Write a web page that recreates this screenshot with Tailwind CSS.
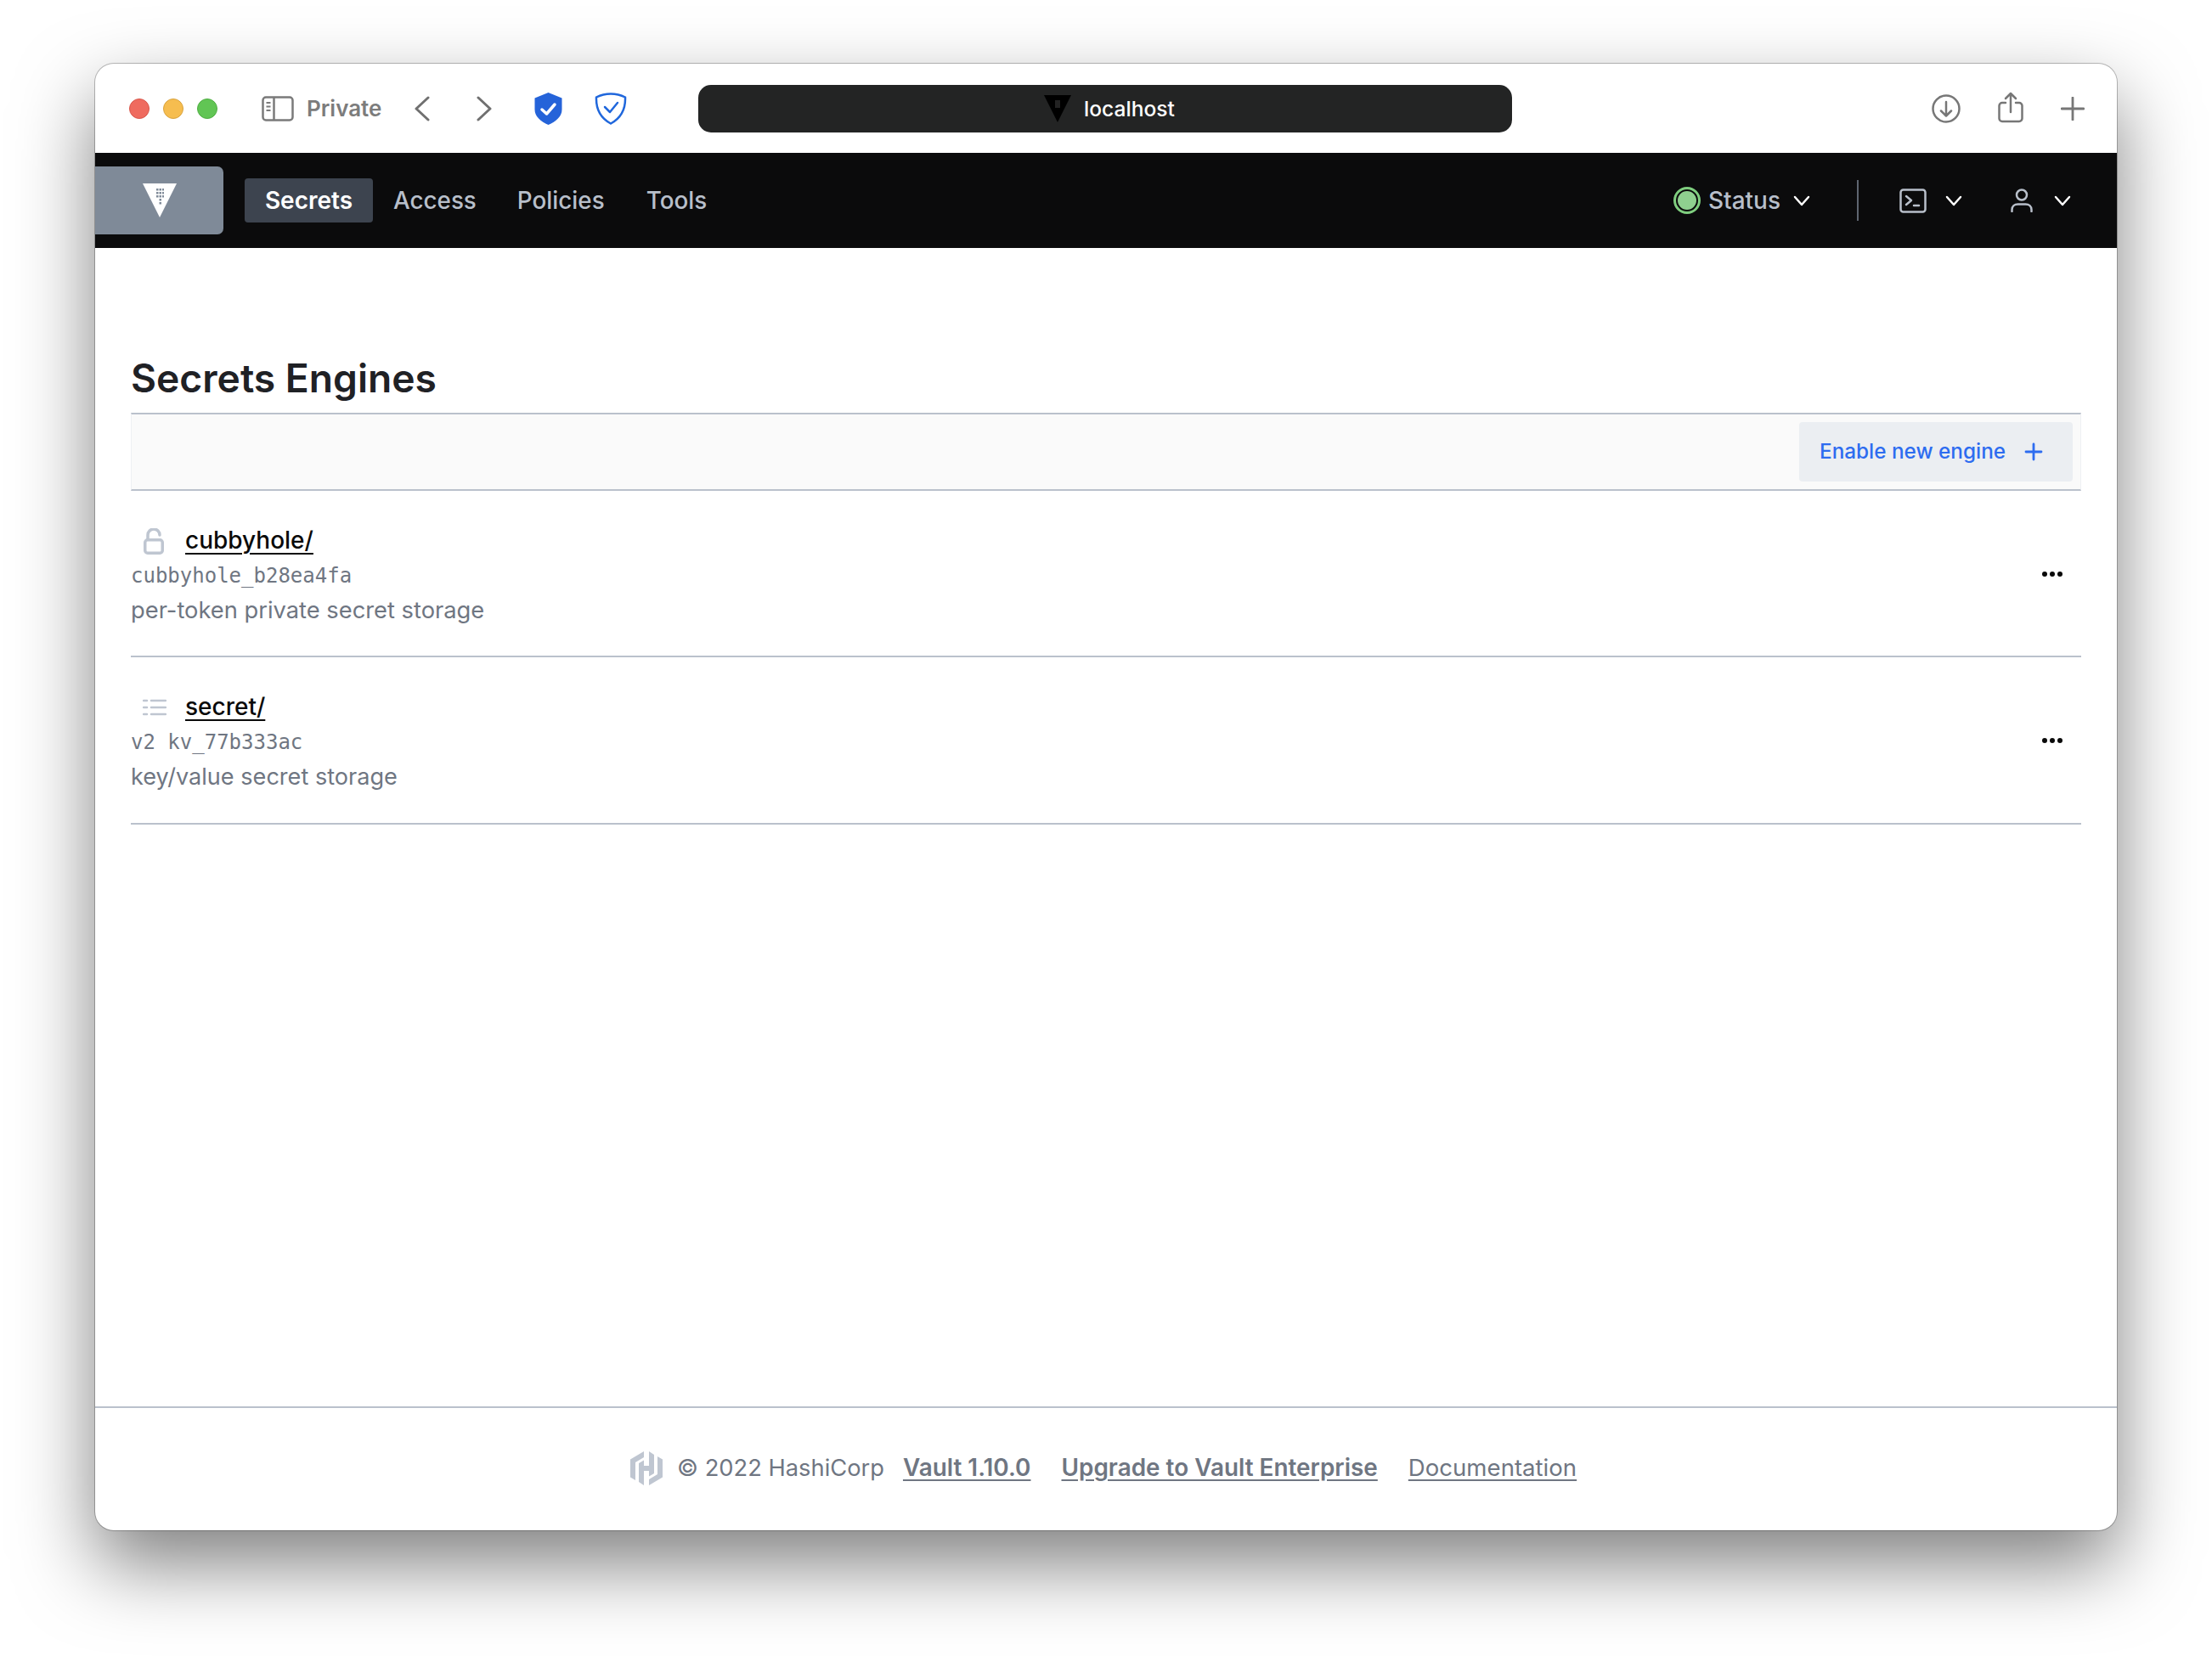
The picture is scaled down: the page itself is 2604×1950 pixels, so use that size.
<!DOCTYPE html>
<html>
<head>
    <title>Secrets Engines</title>
    <script src="https://cdn.jsdelivr.net/npm/@tailwindcss/browser@4"></script>
</head>
<body class="bg-white font-['Inter',sans-serif] w-[2604px] h-[1950px] overflow-hidden pl-[112px] pt-[75px]">
    <div class="w-[2380px] h-[1727px] flex flex-col bg-white rounded-[22px] overflow-hidden ring-1 ring-black/25 shadow-[0_40px_90px_rgba(0,0,0,0.5)]">
        <!-- browser bar -->
        <div class="h-[105px] shrink-0 flex items-center pl-[40px]">
            <div class="flex gap-[16px]">
                <div class="w-[24px] h-[24px] rounded-full bg-[#ef6b5f] border border-[#d9574c]"></div>
                <div class="w-[24px] h-[24px] rounded-full bg-[#f6bd4f] border border-[#d9a33e]"></div>
                <div class="w-[24px] h-[24px] rounded-full bg-[#61c554] border border-[#4fad43]"></div>
            </div>
            <svg class="ml-[52px]" width="38" height="30" viewBox="0 0 38 30" fill="none" stroke="#7a7a7a" stroke-width="2.5">
                <rect x="1.500" y="1.500" width="35" height="27" rx="3.500"/>
                <path d="M14.500 1.500v27"/>
                <path d="M5.500 8h5M5.500 12.500h5M5.500 17h5" stroke-width="2"/>
            </svg>
            <span class="ml-[15px] w-[89px] text-[26px] font-semibold text-[#7c7c7c]">Private</span>
            <svg class="ml-[38px]" width="18" height="30" viewBox="0 0 18 30" fill="none" stroke="#707070" stroke-width="3" stroke-linecap="round" stroke-linejoin="round"><path d="M16 2 2 15l14 13"/></svg>
            <svg class="ml-[55px]" width="18" height="30" viewBox="0 0 18 30" fill="none" stroke="#707070" stroke-width="3" stroke-linecap="round" stroke-linejoin="round"><path d="m2 2 14 13L2 28"/></svg>
            <svg class="ml-[50px]" width="33" height="38" viewBox="0 0 33 38">
                <path d="M16.500 0 32.500 6.500V20c0 8-7 14-16 18C7.500 34 .5 28 .5 20V6.500Z" fill="#2563d9"/>
                <path d="m9 20 5.500 5L24 14" fill="none" stroke="#fff" stroke-width="3.500" stroke-linecap="round" stroke-linejoin="round"/>
            </svg>
            <svg class="ml-[38px]" width="38" height="38" viewBox="0 0 38 38" fill="none" stroke="#2067dc" stroke-width="2.500">
                <path d="M19 1.500c6 0 12 1.500 17 4 .5 12-4 24-17 31C6 29.500 1.500 17.500 2 5.500c5-2.500 11-4 17-4Z"/>
                <path d="m12 17 6 6 9-11" stroke-linecap="round" stroke-linejoin="round"/>
            </svg>
            <div class="ml-[84px] w-[958px] h-[56px] rounded-[15px] bg-[#232424] flex items-center justify-center pl-[10px]">
                <svg width="32" height="32" viewBox="0 0 32 32"><path d="M0 0h32L16 32Z" fill="#000"/><path d="M13 6h6v9h-6z" fill="#222"/></svg>
                <span class="ml-[15px] mt-[2px] text-[24.6px] font-medium text-white">localhost</span>
            </div>
            <div class="ml-auto mr-[38px] flex items-center">
                <svg width="34" height="34" viewBox="0 0 34 34" fill="none" stroke="#777" stroke-width="2.500" stroke-linecap="round" stroke-linejoin="round">
                    <circle cx="17" cy="17" r="15.500"/><path d="M17 9v16M11 19.500l6 6 6-6"/>
                </svg>
                <svg class="ml-[44px] -mt-[3px]" width="30" height="37" viewBox="0 0 30 37" fill="none" stroke="#777" stroke-width="2.500" stroke-linecap="round" stroke-linejoin="round">
                    <path d="M9 13H5a3.500 3.500 0 0 0-3.500 3.500v15A3.500 3.500 0 0 0 5 35h20a3.500 3.500 0 0 0 3.500-3.500v-15A3.500 3.500 0 0 0 25 13h-4"/>
                    <path d="M15 24V2M9 8l6-6 6 6"/>
                </svg>
                <svg class="ml-[44px]" width="28" height="28" viewBox="0 0 28 28" fill="none" stroke="#777" stroke-width="2.800" stroke-linecap="round"><path d="M14 1v26M1 14h26"/></svg>
            </div>
        </div>
        <!-- nav -->
        <div class="h-[112px] shrink-0 bg-[#0b0b0c] flex items-center">
            <div class="w-[151px] h-[80px] bg-[#7f8a98] rounded-r-[7px] flex items-center justify-center">
                <svg width="40" height="40" viewBox="0 0 40 40">
                    <path d="M0 0h40L20 40Z" fill="#fff"/>
                    <path d="M16 6h2.500v2.500H16zM19.500 6H22v2.500h-2.500zM23 6h2v2.500h-2zM16 10h2.500v2.500H16zM19.500 10H22v2.500h-2.500zM23 10h2v2.500h-2zM16 14h2.500v2.500H16zM19.500 14H22v2.500h-2.500zM23 14h2v2.500h-2zM19.500 18H22v2.500h-2.500zM19.500 22H22v2.500h-2.500z" fill="#7f8a98"/>
                </svg>
            </div>
            <div class="ml-[25px] h-[52px] w-[151px] rounded-[4px] bg-[#3d444f] flex items-center justify-center text-[28px] font-semibold text-white">Secrets</div>
            <div class="ml-[24px] mt-[1px] text-[27.8px] font-medium text-[#b8bfca]">Access</div>
            <div class="ml-[48px] mt-[1px] text-[27.8px] font-medium text-[#b8bfca]">Policies</div>
            <div class="ml-[49px] mt-[1px] text-[27.8px] font-medium text-[#b8bfca]">Tools</div>
            <div class="ml-auto flex items-center pr-[54px]">
                <div class="w-[32px] h-[32px] rounded-full border-[3px] border-[#7fce7f] p-[2px]"><div class="w-full h-full rounded-full bg-[#8fd08f]"></div></div>
                <span class="ml-[9px] text-[28px] font-medium text-[#b8bfca]">Status</span>
                <svg class="ml-[15px]" width="20" height="13" viewBox="0 0 20 13" fill="none" stroke="#fff" stroke-width="2.500" stroke-linecap="round" stroke-linejoin="round"><path d="m2 2 8 9 8-9"/></svg>
                <div class="ml-[55px] w-[2px] h-[48px] bg-[#5e6570]"></div>
                <svg class="ml-[48px]" width="32" height="29" viewBox="0 0 32 29" fill="none" stroke="#b8bfca" stroke-width="2.500" stroke-linecap="round" stroke-linejoin="round">
                    <rect x="1.500" y="1.500" width="29" height="26" rx="3"/><path d="m8 9 6 5-6 5M17 20h6"/>
                </svg>
                <svg class="ml-[22px]" width="20" height="13" viewBox="0 0 20 13" fill="none" stroke="#fff" stroke-width="2.500" stroke-linecap="round" stroke-linejoin="round"><path d="m2 2 8 9 8-9"/></svg>
                <svg class="ml-[57px]" width="26" height="28" viewBox="0 0 26 28" fill="none" stroke="#b8bfca" stroke-width="2.500" stroke-linecap="round">
                    <circle cx="13" cy="7.500" r="6"/><path d="M1.500 27v-2c0-4 3-6.500 7-6.500h9c4 0 7 2.500 7 6.500v2"/>
                </svg>
                <svg class="ml-[25px]" width="20" height="13" viewBox="0 0 20 13" fill="none" stroke="#fff" stroke-width="2.500" stroke-linecap="round" stroke-linejoin="round"><path d="m2 2 8 9 8-9"/></svg>
            </div>
        </div>
        <!-- content -->
        <div class="flex-1 flex flex-col px-[42px] pt-[124px]">
            <h1 class="text-[46.2px] leading-[58px] font-semibold text-[#1f2125]">Secrets Engines</h1>
            <div class="mt-[12px] w-[2296px] h-[92px] bg-[#fafafa] border-y-2 border-x border-y-[#bac1cc] border-x-[#eef0f3] flex items-center justify-end pr-[9px]">
                <div class="w-[322px] h-[70px] rounded-[4px] bg-[#ebeef2] flex items-center pl-[24px]">
                    <span class="-mt-[2px] text-[24.3px] font-medium text-[#2d6cf0]">Enable new engine</span>
                    <svg class="ml-[22px]" width="22" height="22" viewBox="0 0 22 22" fill="none" stroke="#2d6cf0" stroke-width="2.800" stroke-linecap="round"><path d="M11 2v18M2 11h18"/></svg>
                </div>
            </div>
            <!-- cubbyhole row -->
            <div class="w-[2296px] h-[196px] border-b-2 border-[#bac1cc] flex items-center justify-between">
                <div class="mt-[3px]">
                    <div class="flex items-center h-[45px]">
                        <svg class="ml-[15px] mt-[4px]" width="24" height="31" viewBox="0 0 24 31" fill="none" stroke="#bfc6d1" stroke-width="3.500" stroke-linecap="round">
                            <path d="M5 13V8a7 7 0 0 1 14 0"/><rect x="1.750" y="13.750" width="20.500" height="15.500" rx="3"/>
                        </svg>
                        <span class="ml-[25px] text-[28px] font-medium text-[#0a0a0a] underline underline-offset-[5px] decoration-2">cubbyhole/</span>
                    </div>
                    <div class="h-[40px] leading-[40px] font-['DejaVu_Sans_Mono',monospace] text-[24px] text-[#6f7682]">cubbyhole_b28ea4fa</div>
                    <div class="h-[42px] leading-[42px] text-[27.3px] text-[#6f7682]">per-token private secret storage</div>
                </div>
                <div class="mr-[22px] mt-[2px] flex gap-[3px]">
                    <div class="w-[6px] h-[6px] rounded-full bg-[#0a0a0a]"></div><div class="w-[6px] h-[6px] rounded-full bg-[#0a0a0a]"></div><div class="w-[6px] h-[6px] rounded-full bg-[#0a0a0a]"></div>
                </div>
            </div>
            <!-- secret row -->
            <div class="w-[2296px] h-[197px] border-b-2 border-[#bac1cc] flex items-center justify-between">
                <div class="mt-[2px]">
                    <div class="flex items-center h-[45px]">
                        <svg class="ml-[14px] mt-[2px]" width="28" height="22" viewBox="0 0 28 22" fill="none" stroke="#bfc6d1" stroke-width="2.500" stroke-linecap="round">
                            <path d="M1 3h4M10 3h17M1 11h4M10 11h17M1 19h4M10 19h17"/>
                        </svg>
                        <span class="ml-[22px] text-[28px] font-medium text-[#0a0a0a] underline underline-offset-[5px] decoration-2">secret/</span>
                    </div>
                    <div class="h-[40px] leading-[40px] font-['DejaVu_Sans_Mono',monospace] text-[24px] text-[#6f7682]">v2 kv_77b333ac</div>
                    <div class="h-[42px] leading-[42px] text-[27.1px] text-[#6f7682]">key/value secret storage</div>
                </div>
                <div class="mr-[22px] mt-[1px] flex gap-[3px]">
                    <div class="w-[6px] h-[6px] rounded-full bg-[#0a0a0a]"></div><div class="w-[6px] h-[6px] rounded-full bg-[#0a0a0a]"></div><div class="w-[6px] h-[6px] rounded-full bg-[#0a0a0a]"></div>
                </div>
            </div>
        </div>
        <!-- footer -->
        <div class="h-[146px] shrink-0 border-t-2 border-[#bac1cc] flex items-center pb-[2px] pl-[630px] text-[27.3px] text-[#6f7682]">
            <svg width="38" height="40" viewBox="0 0 38 40" fill="#bfc6d1">
                <path d="M16 0 0 9.500v21L6 34V13l10-6Z"/>
                <path d="M22 40l16-9.500v-21L32 6v21l-10 6Z"/>
                <path d="M16 10.500 10 14v22l6 4V23h6v-6h-6Z"/>
                <path d="M22 29.500 28 26V4l-6-4v17h-4v6h4Z"/>
            </svg>
            <span class="ml-[17px]">© 2022 HashiCorp</span>
            <span class="ml-[22px] text-[27.9px] font-semibold underline underline-offset-4">Vault 1.10.0</span>
            <span class="ml-[36px] text-[27.9px] font-semibold underline underline-offset-4">Upgrade to Vault Enterprise</span>
            <span class="ml-[36px] text-[27.6px] underline underline-offset-4">Documentation</span>
        </div>
    </div>
</body>
</html>
